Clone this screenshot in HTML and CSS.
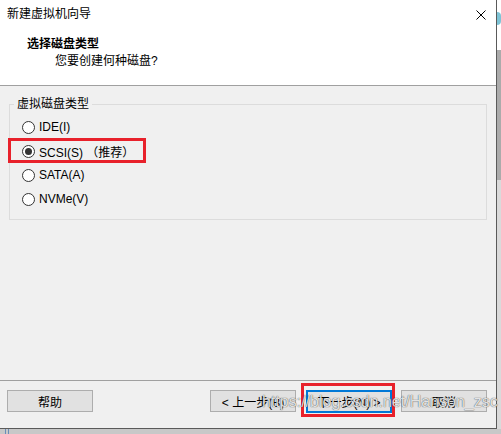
FILE: index.html
```html
<!DOCTYPE html>
<html lang="zh-CN">
<head>
    <meta charset="UTF-8">
    <title>新建虚拟机向导</title>
    <link rel="stylesheet" href="styles.css">
</head>
<body>
    <div class="screen">
        <div class="dialog">
            <div class="header">
                <div class="title-row">
                    <span class="title">新建虚拟机向导</span>
                    <svg class="close" width="10" height="10" viewBox="0 0 10 10">
                        <path d="M0.5 0.5 L9.5 9.5 M9.5 0.5 L0.5 9.5" stroke="#000" stroke-width="1" fill="none"/>
                    </svg>
                </div>
                <div class="heading">选择磁盘类型</div>
                <div class="subheading">您要创建何种磁盘?</div>
            </div>

            <div class="content">
                <fieldset class="group">
                    <legend>虚拟磁盘类型</legend>
                    <label class="option"><input type="radio" name="disk">IDE(I)</label>
                    <label class="option marked"><input type="radio" name="disk" checked>SCSI(S)&nbsp;（推荐）<span class="mark"></span></label>
                    <label class="option"><input type="radio" name="disk">SATA(A)</label>
                    <label class="option"><input type="radio" name="disk">NVMe(V)</label>
                </fieldset>
            </div>

            <div class="footer">
                <button class="btn">帮助</button>
                <div class="spacer"></div>
                <button class="btn">&lt; 上一步(B)</button>
                <button class="btn default">下一步(N) &gt;<span class="mark"></span></button>
                <button class="btn">取消</button>
                <span class="watermark">https://blog.csdn.net/Hanson_zsc</span>
            </div>
        </div>
        <div class="edge">
            <div class="edge-top"><span class="dot"></span></div>
            <div class="edge-mid"></div>
            <div class="edge-low"></div>
        </div>
    </div>
    <div class="bottom-edge">
        <span class="tick"></span>
        <span class="tick"></span>
    </div>
</body>
</html>
```

FILE: styles.css
```css
body {
    margin: 0;
    background-color: #c4c4c4;
    font-family: "Liberation Sans", "Noto Sans CJK SC", sans-serif;
    font-size: 12px;
    color: #000;
    width: 501px;
    height: 434px;
    overflow: hidden;
}
.screen {
    display: flex;
    height: 429px;
}
.dialog {
    width: 496px;
    height: 428px;
    display: flex;
    flex-direction: column;
    background-color: #f0f0f0;
    border-right: 1px solid #5a5a5a;
    border-bottom: 1px solid #5a5a5a;
}
.header {
    height: 86px;
    box-sizing: border-box;
    background-color: #fff;
    border-bottom: 1px solid #a0a0a0;
    padding-top: 7px;
}
.title-row {
    display: flex;
    align-items: center;
    height: 14px;
    padding-left: 7px;
    padding-right: 10px;
}
.title {
    flex: 1;
    line-height: 14px;
}
.close {
    margin-top: 1px;
}
.heading {
    margin-top: 15px;
    padding-left: 27px;
    line-height: 16px;
    font-weight: bold;
}
.subheading {
    margin-top: 1px;
    padding-left: 55px;
    line-height: 16px;
}
.content {
    flex: 1;
    padding-top: 11px;
}
.group {
    margin: 0 0 0 9px;
    width: 478px;
    box-sizing: border-box;
    border: 1px solid #dcdcdc;
    padding: 4px 4px 8px 4px;
}
.group legend {
    padding: 0 3px;
    line-height: 14px;
}
.option {
    display: flex;
    align-items: center;
    width: fit-content;
    height: 24px;
    margin-left: 8px;
    position: relative;
}
.option input {
    appearance: none;
    width: 13px;
    height: 13px;
    margin: 0 4px 0 0;
    border: 1px solid #333;
    border-radius: 50%;
    background-color: #fff;
    box-sizing: border-box;
    display: flex;
    align-items: center;
    justify-content: center;
}
.option input:checked::after {
    content: "";
    width: 7px;
    height: 7px;
    border-radius: 50%;
    background-color: #333;
}
.option .mark {
    position: absolute;
    left: -14px;
    right: -12px;
    top: -1px;
    bottom: 0;
    border: 3px solid #e8212b;
}
.footer {
    height: 38px;
    border-top: 1px solid #a0a0a0;
    display: flex;
    align-items: flex-start;
    padding: 9px 9px 0 7px;
    gap: 10px;
    position: relative;
}
.spacer {
    flex: 1;
}
.btn {
    width: 86px;
    height: 22px;
    padding: 0;
    font-family: "Liberation Sans", "Noto Sans CJK SC", sans-serif;
    font-size: 12px;
    color: #000;
    background-color: #e1e1e1;
    border: 1px solid #adadad;
    position: relative;
}
.btn.default {
    border: 2px solid #0078d7;
    height: 23px;
}
.btn:last-of-type {
    margin-left: -1px;
}
.btn .mark {
    position: absolute;
    left: -7px;
    right: -5px;
    top: -9px;
    bottom: -6px;
    border: 3px solid #e8212b;
}
.watermark {
    position: absolute;
    left: 262px;
    top: 11px;
    font-size: 16px;
    line-height: 20px;
    color: rgba(255, 255, 255, 0.85);
    text-shadow: 0 0 1px rgba(0, 0, 0, 0.6), 0 0 1px rgba(0, 0, 0, 0.4);
    pointer-events: none;
}
.edge {
    width: 4px;
    display: flex;
    flex-direction: column;
}
.edge-top {
    height: 50px;
    background-color: #fff;
    padding-top: 12px;
    box-sizing: border-box;
}
.dot {
    display: block;
    width: 4px;
    height: 13px;
    border-radius: 0 6px 6px 0;
    background-color: #7ec4d6;
}
.edge-mid {
    height: 130px;
    background-color: #ababab;
}
.edge-low {
    flex: 1;
    background-color: #dadada;
}
.bottom-edge {
    height: 5px;
    display: flex;
    gap: 2px;
    padding-left: 5px;
    background-color: #c8c8c8;
}
.tick {
    width: 1px;
    background-color: #6b8db8;
}
```
